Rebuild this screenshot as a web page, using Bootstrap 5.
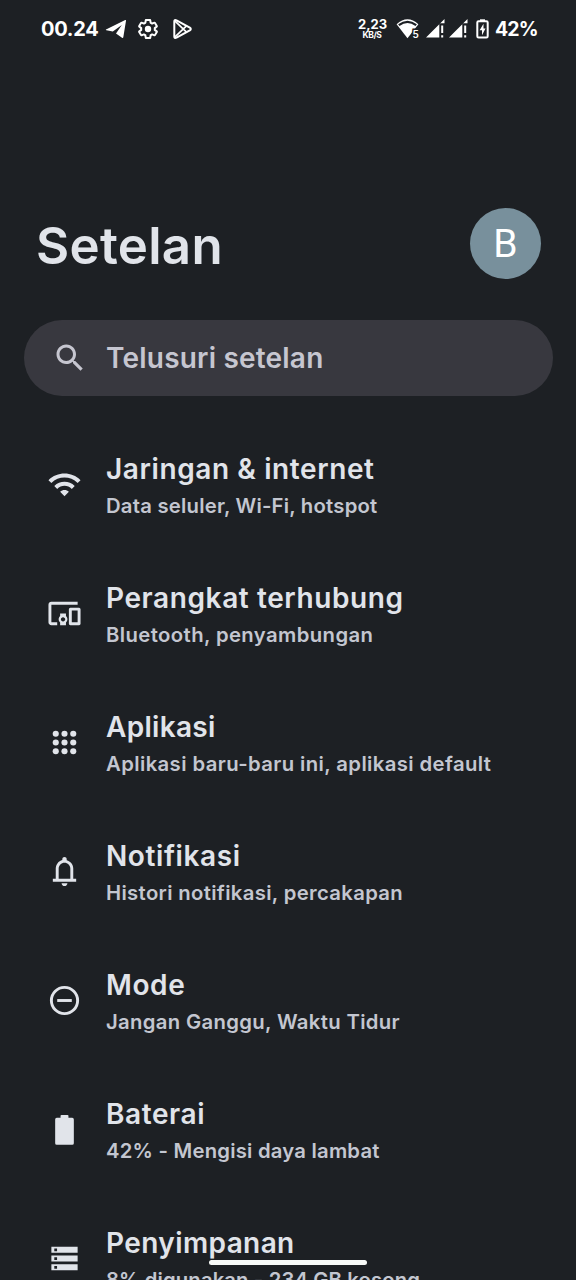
<!DOCTYPE html>
<html lang="id" data-bs-theme="dark">
<head>
<meta charset="utf-8">
<meta name="viewport" content="width=device-width, initial-scale=1">
<title>Setelan</title>
<link href="https://cdn.jsdelivr.net/npm/bootstrap@5.3.0/dist/css/bootstrap.min.css" rel="stylesheet">
<style>
  body { background: #1d2024; color: #e1e4ea; font-family: Inter, "Open Sans", sans-serif; height: 1280px; overflow: hidden; }
  .phone { width: 576px; height: 1280px; }
  svg { display: block; flex: none; fill: currentColor; }

  /* Status bar */
  .statusbar { height: 57px; padding: 0 40px 0 41px; color: #fff; }
  .clock, .percent { font-size: 20px; font-weight: 700; line-height: 24px; white-space: nowrap; letter-spacing: -.3px; }
  .clock { width: 64px; }
  .percent { width: 41px; margin-left: 6px; font-size: 19.5px; letter-spacing: -.9px; }
  .speed { width: 28px; margin: 2px 10px 0 0; font-weight: 700; text-align: center; white-space: nowrap; }
  .speed-value { font-size: 13px; line-height: 12px; }
  .speed-unit { font-size: 8.5px; line-height: 11px; letter-spacing: -.4px; }
  .wifi-status { margin-right: 6px; }
  .play-status { margin-left: -5px; }

  /* Title and search */
  .heading { margin-top: 151px; height: 71px; padding: 0 35px 0 36px; }
  .heading h1 { font-size: 51px; font-weight: 600; line-height: 60px; margin: 8px 0 0; color: #e1e4ea; letter-spacing: .3px; }
  .avatar { width: 71px; height: 71px; background: #78909c; color: #fff; font: 400 39px/73px Roboto, sans-serif; }
  .searchbox { margin: 41px 23px 0 24px; height: 76px; background: #38383f; color: #c6c6d0; padding-left: 28px; gap: 18px; }
  .search-text { font-size: 28px; font-weight: 600; line-height: 36px; letter-spacing: .2px; }

  /* Settings rows */
  .settings { margin-top: 25px; }
  .setting { height: 129px; padding: 28px 0 0 47px; gap: 24px; }
  .setting svg { margin-top: 18px; }
  .setting-title { font-size: 28px; font-weight: 600; line-height: 40px; white-space: nowrap; letter-spacing: .6px; }
  .setting-note { font-size: 20.3px; font-weight: 600; line-height: 33px; color: #c3c6d0; white-space: nowrap; letter-spacing: .34px; }
  .apps .setting-title { letter-spacing: .3px; }
  .storage .setting-title { letter-spacing: .4px; }
  .network .setting-note, .battery .setting-note { letter-spacing: .22px; }
  .devices .setting-note, .apps .setting-note { letter-spacing: .4px; }
  .storage .setting-note { letter-spacing: .12px; }

  .homebar { left: 209px; top: 1260px; width: 158px; height: 5px; background: #f8faf8; }
</style>
</head>
<body>
<main class="phone position-relative overflow-hidden">
  <div class="statusbar d-flex align-items-center justify-content-between">
    <div class="d-flex align-items-center">
      <span class="clock">00.24</span>
      <svg width="22" height="21" viewBox="0 0 22 21"><path d="M1 11.4 20.2 2.1q1-.4.8.7L18.300 19.300q-.3 1.200-1.300.5L11 15.600 16.800 7 7.800 13.600 1.400 12.300q-1-.4-.4-.9z"/></svg>
      <svg class="ms-2 me-3" width="26" height="20" viewBox="-2.300 1 28.600 22"><path fill="none" stroke="currentColor" stroke-width="2.200" stroke-linejoin="round" d="M19.430 12.980c.04-.32.07-.64.07-.98 0-.34-.03-.66-.07-.98l2.110-1.650c.19-.15.24-.42.12-.64l-2-3.460c-.09-.16-.26-.25-.44-.25-.06 0-.12.010-.17.030l-2.490 1c-.52-.4-1.080-.73-1.690-.98l-.38-2.650C14.460 2.180 14.250 2 14 2h-4c-.25 0-.46.18-.49.42l-.38 2.650c-.61.25-1.170.59-1.690.98l-2.490-1c-.06-.02-.12-.03-.18-.03-.17 0-.34.09-.43.25l-2 3.460c-.13.22-.07.49.12.64l2.110 1.650c-.04.32-.07.65-.07.98 0 .33.03.66.07.98l-2.110 1.650c-.19.15-.24.42-.12.64l2 3.460c.09.16.26.25.44.25.06 0 .12-.01.17-.03l2.490-1c.52.4 1.080.73 1.690.98l.38 2.650c.03.24.24.42.49.42h4c.25 0 .46-.18.49-.42l.38-2.650c.61-.25 1.170-.59 1.690-.98l2.490 1c.06.02.12.03.18.03.17 0 .34-.09.43-.25l2-3.460c.12-.22.07-.49-.12-.64z"/><circle cx="12" cy="12" r="3.500"/></svg>
      <svg class="play-status" width="22" height="22" viewBox="0 0 22 22"><g fill="none" stroke="currentColor" stroke-width="2" stroke-linejoin="round"><path d="M2.300 3.500Q2.300 1.300 4.500 2.300L17.800 9.600Q19.800 11 17.800 12.400L4.500 19.700Q2.300 20.700 2.300 18.500z"/><path stroke-width="1.700" d="M2.800 2.800 14.500 14.200M2.800 19.200 14.500 7.800"/></g></svg>
    </div>
    <div class="d-flex align-items-center">
      <div class="speed"><div class="speed-value">2,23</div><div class="speed-unit">KB/S</div></div>
      <svg class="wifi-status" width="24" height="21" viewBox="0 0 24 21"><path d="M.6 6.200Q11.500-3.800 22.400 6.200L11.500 20.200z"/><path fill="none" stroke="#1d2024" stroke-width="2.200" d="M2.800 7.200Q11.500.4 20.200 7.200"/><text x="16.500" y="19.800" font-size="10" font-weight="600" stroke="#1d2024" stroke-width="3" paint-order="stroke">5</text></svg>
      <svg width="19" height="19" viewBox="0 0 19 19"><path d="M0 18.500 13.300 5.200V18.500zM13.300 5.200 18.500 0V4.300H14.600zM15.200 6.600h2v7.400h-2zM15.200 16.300h2v2.200h-2z"/></svg>
      <svg class="ms-1" width="19" height="19" viewBox="0 0 19 19"><path d="M0 18.500 13.300 5.200V18.500zM13.300 5.200 18.500 0V4.300H14.600zM15.200 6.600h2v7.400h-2zM15.200 16.300h2v2.200h-2z"/></svg>
      <svg class="ms-2" width="13" height="20" viewBox="0 0 13 20"><path d="M4 .3h5v2H4z"/><rect x="1.300" y="2.300" width="10.400" height="16.200" rx="1.300" fill="none" stroke="currentColor" stroke-width="2"/><path d="M7.500 4.800 3.600 11.200H6v5l3.500-6.700H7.500z"/></svg>
      <span class="percent">42%</span>
    </div>
  </div>

  <header class="heading d-flex justify-content-between">
    <h1>Setelan</h1>
    <div class="avatar rounded-circle text-center">B</div>
  </header>

  <div class="searchbox rounded-pill d-flex align-items-center">
    <svg width="36" height="36" viewBox="0 0 24 24"><path d="M15.500 14h-.79l-.28-.27C15.410 12.590 16 11.110 16 9.500 16 5.910 13.090 3 9.500 3S3 5.910 3 9.500 5.910 16 9.500 16c1.610 0 3.090-.59 4.230-1.570l.27.28v.79l5 4.990L20.490 19l-4.990-5zm-6 0C7.010 14 5 11.990 5 9.500S7.010 5 9.500 5 14 7.010 14 9.500 11.990 14 9.500 14z"/></svg>
    <span class="search-text">Telusuri setelan</span>
  </div>

  <div class="settings">
    <div class="setting network d-flex">
      <svg width="35" height="35" viewBox="0 0 24 24"><path d="M1 9l2 2c4.970-4.970 13.030-4.970 18 0l2-2C16.930 2.930 7.080 2.930 1 9zm8 8l3 3 3-3c-1.650-1.660-4.340-1.660-6 0zm-4-4l2 2c2.760-2.760 7.240-2.760 10 0l2-2C15.140 9.140 8.870 9.140 5 13z"/></svg>
      <div><div class="setting-title">Jaringan &amp; internet</div><div class="setting-note">Data seluler, Wi-Fi, hotspot</div></div>
    </div>
    <div class="setting devices d-flex">
      <svg width="35" height="35" viewBox="0 0 24 24"><path d="M3 6h18V4H3c-1.100 0-2 .9-2 2v12c0 1.100.9 2 2 2h4v-2H3V6zm10 6H9v1.780c-.61.55-1 1.330-1 2.220s.39 1.670 1 2.220V20h4v-1.780c.61-.55 1-1.340 1-2.220s-.39-1.670-1-2.220V12zm-2 5.500c-.83 0-1.500-.67-1.500-1.500s.67-1.500 1.500-1.500 1.500.67 1.500 1.500-.67 1.500-1.500 1.500zM22 8h-6c-.5 0-1 .5-1 1v10c0 .5.5 1 1 1h6c.5 0 1-.5 1-1V9c0-.5-.5-1-1-1zm-1 10h-4v-8h4v8z"/></svg>
      <div><div class="setting-title">Perangkat terhubung</div><div class="setting-note">Bluetooth, penyambungan</div></div>
    </div>
    <div class="setting apps d-flex">
      <svg width="35" height="35" viewBox="0 0 24 24"><circle cx="6" cy="6" r="2.100"/><circle cx="12" cy="6" r="2.100"/><circle cx="18" cy="6" r="2.100"/><circle cx="6" cy="12" r="2.100"/><circle cx="12" cy="12" r="2.100"/><circle cx="18" cy="12" r="2.100"/><circle cx="6" cy="18" r="2.100"/><circle cx="12" cy="18" r="2.100"/><circle cx="18" cy="18" r="2.100"/></svg>
      <div><div class="setting-title">Aplikasi</div><div class="setting-note">Aplikasi baru-baru ini, aplikasi default</div></div>
    </div>
    <div class="setting d-flex">
      <svg width="35" height="35" viewBox="0 0 24 24"><path fill-rule="evenodd" d="M4 19v-2h2v-7c0-1.380.42-2.610 1.250-3.690.83-1.080 1.920-1.790 3.250-2.120V3.500c0-.42.15-.77.44-1.060C11.230 2.150 11.580 2 12 2s.77.15 1.060.44c.29.29.44.64.44 1.060v.7c1.330.33 2.420 1.040 3.250 2.120C17.580 7.390 18 8.620 18 10v7h2v2H4zm8 3c-.55 0-1.020-.2-1.410-.59S10 20.550 10 20h4c0 .55-.2 1.020-.59 1.410S12.550 22 12 22zM8 17h8v-7c0-1.100-.39-2.040-1.170-2.820S13.100 6 12 6s-2.040.39-2.830 1.180C8.390 7.960 8 8.900 8 10v7z"/></svg>
      <div><div class="setting-title">Notifikasi</div><div class="setting-note">Histori notifikasi, percakapan</div></div>
    </div>
    <div class="setting d-flex">
      <svg width="35" height="35" viewBox="0 0 24 24"><circle cx="12" cy="12" r="9" fill="none" stroke="currentColor" stroke-width="2"/><path d="M7 11h10v2H7z"/></svg>
      <div><div class="setting-title">Mode</div><div class="setting-note">Jangan Ganggu, Waktu Tidur</div></div>
    </div>
    <div class="setting battery d-flex">
      <svg width="35" height="35" viewBox="0 0 24 24"><path d="M9.900 2h4.200q.6 0 .6.600V4h2.600q1.100 0 1.100 1.100v16.300q0 1.100-1.100 1.100H6.700q-1.100 0-1.100-1.100V5.100Q5.600 4 6.700 4h2.600V2.600q0-.6.600-.6z"/></svg>
      <div><div class="setting-title">Baterai</div><div class="setting-note">42% - Mengisi daya lambat</div></div>
    </div>
    <div class="setting storage d-flex">
      <svg width="35" height="35" viewBox="0 0 24 24"><path fill-rule="evenodd" d="M3 4h18v4.100H3zM5 5.100v1.900h1.900V5.100zM3 10h18v4.100H3zM5 11.100v1.900h1.900v-1.900zM3 16h18v4.100H3zM5 17.100v1.900h1.900v-1.900z"/></svg>
      <div><div class="setting-title">Penyimpanan</div><div class="setting-note">8% digunakan - 234 GB kosong</div></div>
    </div>
  </div>

  <div class="homebar rounded-pill position-absolute"></div>
</main>
<script src="https://cdn.jsdelivr.net/npm/bootstrap@5.3.0/dist/js/bootstrap.bundle.min.js"></script>
</body>
</html>
